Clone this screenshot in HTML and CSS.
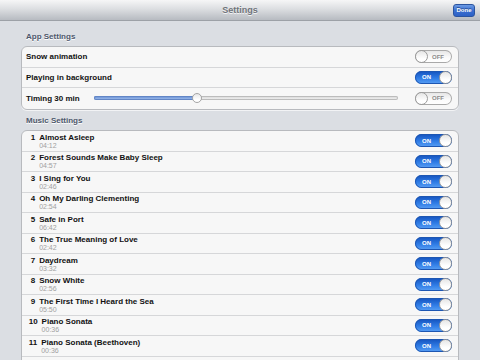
FILE: index.html
```html
<!DOCTYPE html>
<html>
<head>
<meta charset="utf-8">
<link rel="stylesheet" href="styles.css">
</head>
<body>
<div class="nav">
  <div></div>
  <div class="nav-title">Settings</div>
  <div class="nav-right"><span class="done">Done</span></div>
</div>
<div class="content">
  <div class="section-label">App Settings</div>
  <div class="group">
    <div class="row">
      <span class="label">Snow animation</span>
      <span class="switch off"><span class="knob"></span><span class="sw-text">OFF</span></span>
    </div>
    <div class="row">
      <span class="label">Playing in background</span>
      <span class="switch on"><span class="sw-text">ON</span><span class="knob"></span></span>
    </div>
    <div class="row">
      <span class="label">Timing 30 min</span>
      <span class="slider"><span class="fill" style="width:103px"></span><span class="thumb"></span></span>
      <span class="switch off"><span class="knob"></span><span class="sw-text">OFF</span></span>
    </div>
  </div>

  <div class="section-label second">Music Settings</div>
  <div class="group">
    <div class="row track"><span class="num">1</span><span class="text"><span class="title">Almost Asleep</span><span class="sub">04:12</span></span><span class="switch on"><span class="sw-text">ON</span><span class="knob"></span></span></div>
    <div class="row track"><span class="num">2</span><span class="text"><span class="title">Forest Sounds Make Baby Sleep</span><span class="sub">04:57</span></span><span class="switch on"><span class="sw-text">ON</span><span class="knob"></span></span></div>
    <div class="row track"><span class="num">3</span><span class="text"><span class="title">I Sing for You</span><span class="sub">02:46</span></span><span class="switch on"><span class="sw-text">ON</span><span class="knob"></span></span></div>
    <div class="row track"><span class="num">4</span><span class="text"><span class="title">Oh My Darling Clementing</span><span class="sub">02:54</span></span><span class="switch on"><span class="sw-text">ON</span><span class="knob"></span></span></div>
    <div class="row track"><span class="num">5</span><span class="text"><span class="title">Safe in Port</span><span class="sub">06:42</span></span><span class="switch on"><span class="sw-text">ON</span><span class="knob"></span></span></div>
    <div class="row track"><span class="num">6</span><span class="text"><span class="title">The True Meaning of Love</span><span class="sub">02:42</span></span><span class="switch on"><span class="sw-text">ON</span><span class="knob"></span></span></div>
    <div class="row track"><span class="num">7</span><span class="text"><span class="title">Daydream</span><span class="sub">03:32</span></span><span class="switch on"><span class="sw-text">ON</span><span class="knob"></span></span></div>
    <div class="row track"><span class="num">8</span><span class="text"><span class="title">Snow White</span><span class="sub">02:56</span></span><span class="switch on"><span class="sw-text">ON</span><span class="knob"></span></span></div>
    <div class="row track"><span class="num">9</span><span class="text"><span class="title">The First Time I Heard the Sea</span><span class="sub">05:50</span></span><span class="switch on"><span class="sw-text">ON</span><span class="knob"></span></span></div>
    <div class="row track"><span class="num wide">10</span><span class="text"><span class="title">Piano Sonata</span><span class="sub">00:36</span></span><span class="switch on"><span class="sw-text">ON</span><span class="knob"></span></span></div>
    <div class="row track"><span class="num wide">11</span><span class="text"><span class="title">Piano Sonata (Beethoven)</span><span class="sub">00:36</span></span><span class="switch on"><span class="sw-text">ON</span><span class="knob"></span></span></div>
    <div class="row track"></div>
  </div>
</div>
</body>
</html>
```

FILE: styles.css
```css
html, body {
  margin: 0;
  padding: 0;
}
body {
  width: 480px;
  height: 360px;
  overflow: hidden;
  background: #dbdee3;
  font-family: "Liberation Sans", Arial, sans-serif;
}
.nav {
  height: 21px;
  box-sizing: border-box;
  border-bottom: 1px solid #9da1a7;
  background: linear-gradient(#f6f6f7, #dcdee1 45%, #b7bbc1);
  display: grid;
  grid-template-columns: 1fr auto 1fr;
  align-items: center;
}
.nav-title {
  font-size: 9px;
  font-weight: bold;
  color: #6f737a;
  text-shadow: 0 1px 0 #f4f4f4;
}
.nav-right {
  display: flex;
  justify-content: flex-end;
  padding-right: 5px;
}
.done {
  width: 22px;
  height: 13px;
  box-sizing: border-box;
  border: 1px solid #2b549f;
  border-radius: 3px;
  background: linear-gradient(#6c9ae4, #3a6fd0 50%, #2d61c6);
  color: #fff;
  font-size: 6px;
  font-weight: bold;
  display: flex;
  align-items: center;
  justify-content: center;
  text-shadow: 0 -1px 0 #274e96;
}
.content {
  padding: 0 21px;
}
.section-label {
  font-size: 8px;
  font-weight: bold;
  color: #4d576b;
  line-height: 10px;
  padding-left: 5px;
  margin: 11px 0 4px;
  text-shadow: 0 1px 0 #fff;
}
.section-label.second {
  margin-top: 6.5px;
  margin-bottom: 4px;
}
.group {
  background: #f7f7f7;
  border: 1px solid #b8babe;
  border-radius: 6px;
  box-shadow: 0 1px 0 #f2f3f5;
}
.row {
  height: 20.5px;
  box-sizing: border-box;
  border-bottom: 1px solid #d6d7d9;
  display: flex;
  align-items: center;
  padding: 0 6px 0 4px;
}
.row:last-child {
  border-bottom: none;
}
.label {
  font-size: 8px;
  font-weight: bold;
  color: #111;
}
.switch {
  margin-left: auto;
  flex: none;
  width: 37px;
  height: 13px;
  box-sizing: border-box;
  border-radius: 7px;
  display: flex;
  align-items: center;
  font-size: 6px;
  font-weight: bold;
}
.switch.on {
  background: linear-gradient(#1452bd, #2f7ce6 55%, #5aa0f4);
  box-shadow: inset 0 0 0 1px #1d56b2;
  color: #fff;
}
.switch.on .sw-text {
  margin-left: 7px;
}
.switch.off {
  background: linear-gradient(#e4e4e4, #fbfbfb 60%, #ffffff);
  box-shadow: inset 0 0 0 1px #a9a9a9;
  color: #8a8a8a;
}
.switch.off .sw-text {
  margin-left: 4px;
}
.knob {
  width: 13px;
  height: 13px;
  box-sizing: border-box;
  border-radius: 50%;
  border: 1px solid #9c9c9c;
  background: linear-gradient(#e6e6e6, #ffffff 70%);
  flex: none;
}
.switch.on .knob {
  margin-left: auto;
}
.slider {
  margin-left: auto;
  margin-right: 17px;
  width: 304px;
  height: 4px;
  flex: none;
  border-radius: 2px;
  background: linear-gradient(#d6d6d6, #f4f4f4);
  box-shadow: inset 0 0 0 1px #bcbcbc;
  display: flex;
  align-items: center;
}
.slider + .switch {
  margin-left: 0;
}
.fill {
  height: 4px;
  border-radius: 2px;
  background: linear-gradient(#5f89d1, #a8c3ee);
  box-shadow: inset 0 0 0 1px #6286c6;
  flex: none;
}
.thumb {
  width: 10px;
  height: 10px;
  box-sizing: border-box;
  margin-left: -5px;
  border-radius: 50%;
  border: 1px solid #a5a5a5;
  background: linear-gradient(#e8e8e8, #ffffff 70%);
  flex: none;
}
.row.track {
  align-items: flex-start;
  padding-left: 8.7px;
  padding-top: 1.5px;
}
.num {
  font-size: 8px;
  line-height: 9px;
  font-weight: bold;
  color: #111;
  margin-right: 4px;
}
.num.wide {
  margin-left: -2px;
}
.text {
  display: flex;
  flex-direction: column;
}
.title {
  font-size: 8px;
  line-height: 9px;
  font-weight: bold;
  color: #111;
}
.sub {
  font-size: 7px;
  line-height: 8px;
  color: #a0a0a0;
}
.row.track .switch {
  align-self: center;
  margin-top: -1.5px;
}
```
